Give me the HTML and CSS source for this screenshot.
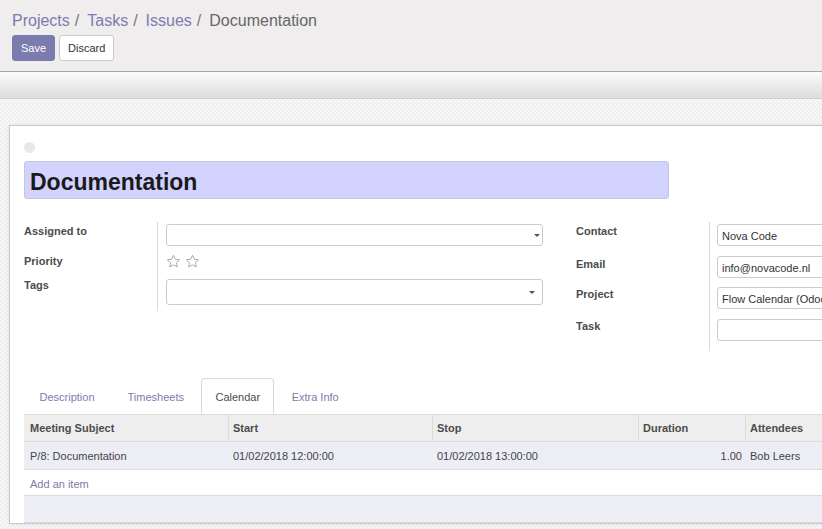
FILE: index.html
```html
<!DOCTYPE html>
<html>
<head>
<meta charset="utf-8">
<title>Documentation</title>
<link rel="stylesheet" href="styles.css">
</head>
<body>
<div class="cp">
  <div class="bc">
    <a class="crumb">Projects</a><span class="sep">/</span><a class="crumb">Tasks</a><span class="sep">/</span><a class="crumb">Issues</a><span class="sep">/</span><span class="cur">Documentation</span>
  </div>
  <div class="btns">
    <button class="btn btn-primary">Save</button>
    <button class="btn">Discard</button>
  </div>
</div>
<div class="band"></div>
<div class="content">
  <div class="sheet">
    <div class="dot"></div>
    <div class="title">Documentation</div>
    <div class="groups">
      <div class="group group-left">
        <div class="lbl">Assigned to</div>
        <div class="fld"><div class="inp sel"><span class="caret"></span></div></div>
        <div class="lbl lbl-pri">Priority</div>
        <div class="fld">
          <div class="stars">
            <svg class="star" viewBox="0 0 24 24"><path d="M12 2.2l2.95 6.2 6.8.85-5 4.7 1.3 6.75L12 17.4l-6.05 3.3 1.3-6.75-5-4.7 6.8-.85z"/></svg>
            <svg class="star" viewBox="0 0 24 24"><path d="M12 2.2l2.95 6.2 6.8.85-5 4.7 1.3 6.75L12 17.4l-6.05 3.3 1.3-6.75-5-4.7 6.8-.85z"/></svg>
          </div>
        </div>
        <div class="lbl lbl-tags">Tags</div>
        <div class="fld"><div class="inp sel tags"><span class="caret"></span></div></div>
      </div>
      <div class="group group-right">
        <div class="lbl">Contact</div>
        <div class="fld"><div class="inp">Nova Code</div></div>
        <div class="lbl lbl-email">Email</div>
        <div class="fld"><div class="inp">info@novacode.nl</div></div>
        <div class="lbl">Project</div>
        <div class="fld"><div class="inp">Flow Calendar (Odoo)</div></div>
        <div class="lbl">Task</div>
        <div class="fld"><div class="inp"></div></div>
      </div>
    </div>
    <div class="tabs">
      <a class="tab">Description</a>
      <a class="tab">Timesheets</a>
      <a class="tab active">Calendar</a>
      <a class="tab">Extra Info</a>
    </div>
    <div class="list">
      <div class="lh">
        <div class="c">Meeting Subject</div>
        <div class="c">Start</div>
        <div class="c">Stop</div>
        <div class="c">Duration</div>
        <div class="c">Attendees</div>
      </div>
      <div class="lr">
        <div class="c">P/8: Documentation</div>
        <div class="c">01/02/2018 12:00:00</div>
        <div class="c">01/02/2018 13:00:00</div>
        <div class="c num">1.00</div>
        <div class="c">Bob Leers</div>
      </div>
      <div class="add">Add an item</div>
      <div class="filler"></div>
    </div>
  </div>
</div>
</body>
</html>
```

FILE: styles.css
```css
* { box-sizing: border-box; }
html, body { margin: 0; padding: 0; overflow: hidden; }
body {
  width: 822px;
  height: 529px;
  font-family: "Liberation Sans", Arial, sans-serif;
  font-size: 11px;
  line-height: 13px;
  color: #4c4c4c;
  background-color: #f4f4f4;
  background-image: repeating-conic-gradient(#f7f7f7 0% 25%, #efefef 0% 50%);
  background-size: 4px 4px;
}

/* control panel */
.cp {
  background: #efeded;
  border-bottom: 1px solid #a9a9a9;
  padding: 12px 12px 10px;
  height: 72px;
}
.bc {
  display: flex;
  font-size: 16px;
  line-height: 18px;
  height: 18px;
  white-space: nowrap;
}
.crumb { color: #7c7bad; text-decoration: none; }
.sep { color: #777; padding: 0 8px 0 5px; }
.cur { color: #666; }
.btns { display: flex; gap: 4px; margin-top: 5px; }
.btn {
  height: 26px;
  padding: 0 8px;
  border: 1px solid #ccc;
  border-radius: 3px;
  background: #fff;
  color: #333;
  font-family: "Liberation Sans", Arial, sans-serif;
  font-size: 11px;
  line-height: 13px;
}
.btn-primary { background: #7c7bad; border-color: #7c7bad; color: #fff; }

/* status band */
.band {
  height: 27px;
  border-bottom: 1px solid #cfcfcf;
  background: linear-gradient(#fbfbfb, #dddddd);
}

/* sheet */
.content { padding: 26px 0 0 9px; }
.sheet {
  width: 1100px;
  background: #fff;
  border: 1px solid #c9c9c9;
  box-shadow: 0 0 4px rgba(0, 0, 0, 0.08);
  padding: 16px 14px 0;
}
.dot {
  width: 11px;
  height: 11px;
  border-radius: 50%;
  background: #e9e7e9;
}
.title {
  margin-top: 8px;
  width: 645px;
  height: 38px;
  background: #d2d2ff;
  border: 1px solid #c6c6dc;
  border-radius: 3px;
  padding: 7px 5px 0;
  font-size: 23px;
  line-height: 27px;
  font-weight: bold;
  color: #1a1a1a;
}

.groups { display: flex; gap: 33px; margin-top: 23px; }
.group { display: grid; grid-template-columns: 133px 1fr; }
.group-left { width: 519px; grid-template-rows: 30px 24px 35px; }
.group-right { width: 518px; grid-template-rows: 32px 31px 32px 34px; }
.lbl { font-weight: bold; padding-top: 2.5px; color: #4c4c4c; }
.lbl-pri { padding-top: 3px; }
.lbl-tags { padding-top: 3px; }
.lbl-email { padding-top: 3.5px; }
.fld { border-left: 1px solid #dcdcdc; padding-left: 8px; }
.group-right .fld { padding-left: 7px; }
.inp {
  width: 377px;
  height: 22px;
  margin-top: 2px;
  border: 1px solid #ccc;
  border-radius: 3px;
  padding: 5px 4px 0;
  color: #333;
  white-space: nowrap;
  overflow: hidden;
}
.inp.sel { display: flex; justify-content: flex-end; align-items: flex-start; padding: 9px 2px 0 4px; }
.inp.tags { height: 26px; margin-top: 3px; padding: 11px 7px 0 4px; }
.caret {
  width: 0;
  height: 0;
  border-left: 3px solid transparent;
  border-right: 3px solid transparent;
  border-top: 3px solid #555;
}
.stars { display: flex; gap: 4px; margin-top: 2px; }
.star { width: 15px; height: 15px; fill: none; stroke: #a0a0a0; stroke-width: 1.4; stroke-linejoin: round; }

/* tabs */
.tabs { display: flex; margin-top: 27px; height: 36px; }
.tab {
  height: 36px;
  padding: 1px 14.5px 0;
  margin-right: 2px;
  border: 1px solid transparent;
  border-bottom: none;
  line-height: 34px;
  color: #7c7bad;
  font-size: 11px;
}
.tab.active {
  padding: 1px 13px 0;
  background: #fff;
  border-color: #dadada;
  border-radius: 4px 4px 0 0;
  color: #4c4c4c;
}

/* list */
.list { width: 1070px; }
.lh, .lr {
  display: grid;
  grid-template-columns: 204px 204px 206px 107px 1fr;
}
.lh {
  height: 28px;
  background: #eee;
  border-top: 1px solid #dcdcdc;
  border-bottom: 1px solid #dcdcdc;
  font-weight: bold;
  color: #4c4c4c;
}
.lh .c { padding: 7px 4px 0 6px; }
.lh .c + .c { border-left: 1px solid #dcdcdc; padding-left: 4px; }
.lr {
  height: 28px;
  background: #ededf6;
  border-bottom: 1px solid #dcdcdc;
  color: #444;
}
.lr .c { padding: 8px 5px 0; }
.lr .c:first-child { padding-left: 6px; }
.lr .c.num { text-align: right; padding-right: 3px; }
.add {
  height: 26px;
  border-bottom: 1px solid #dcdcdc;
  padding: 8px 6px 0;
  color: #7c7bad;
}
.filler {
  height: 27px;
  background: #ededf6;
  border-bottom: 1px solid #dcdcdc;
}
```
